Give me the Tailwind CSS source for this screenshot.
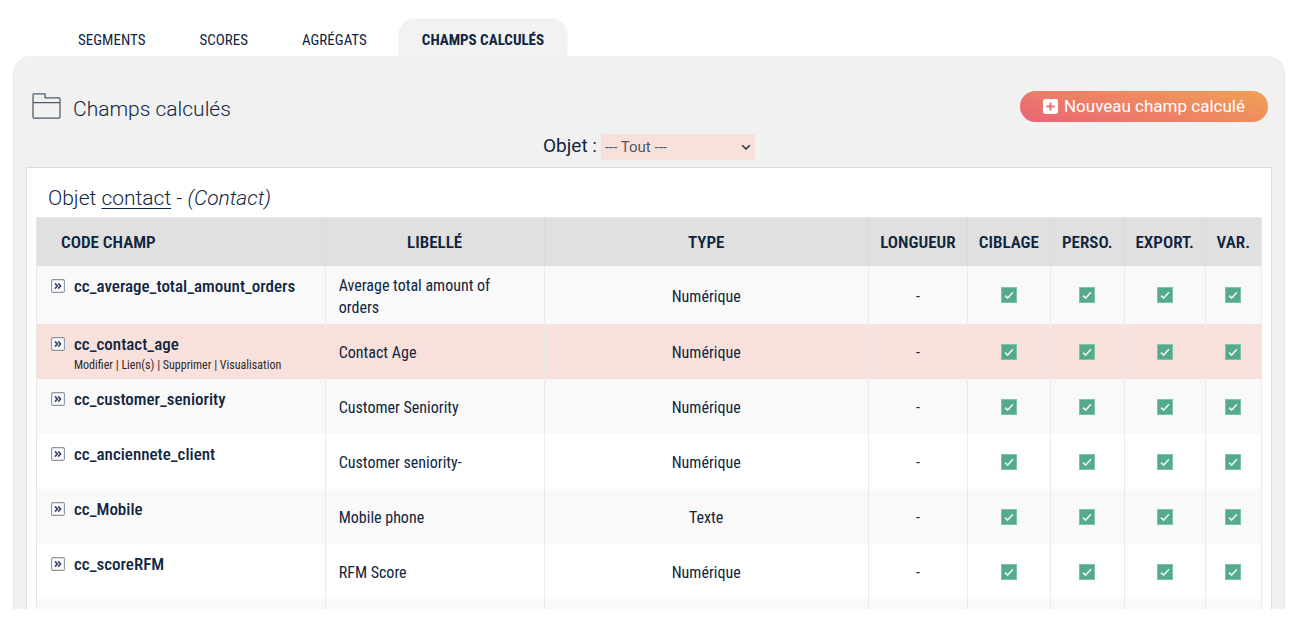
<!DOCTYPE html>
<html lang="fr">
<head>
<meta charset="utf-8">
<meta name="viewport" content="width=device-width, initial-scale=1">
<title>Champs calculés</title>
<script src="https://cdn.jsdelivr.net/npm/@tailwindcss/browser@4"></script>
</head>
<body class="flex h-screen flex-col overflow-hidden bg-white px-[13px] pt-5 pb-[9px] font-['Roboto_Condensed','Liberation_Sans_Narrow',Roboto,sans-serif] text-[#10253f]">

<svg class="hidden" aria-hidden="true">
  <symbol id="check" viewBox="0 0 16 16">
    <rect x="0.5" y="0.5" width="15" height="15" fill="#54aa8a" stroke="#7cc4a8" stroke-width="1"/>
    <path d="M4 8.6 6.6 11 12 5.2" fill="none" stroke="#e9f7f0" stroke-width="1.6"/>
  </symbol>
  <symbol id="expand" viewBox="0 0 14 14">
    <rect x="0.6" y="0.6" width="12.8" height="12.8" rx="1.4" fill="#fdfdfd" stroke="#8b95a3" stroke-width="1.1"/>
    <path d="M4 4.4 6.3 7 4 9.6M7.2 4.4 9.5 7 7.2 9.6" fill="none" stroke="#3a4870" stroke-width="1.7"/>
  </symbol>
</svg>

<nav class="flex h-9 shrink-0 pl-[38px] text-[15px] leading-9">
  <a href="#segments" class="px-[27px] pt-[2px]">SEGMENTS</a>
  <a href="#scores" class="px-[27px] pt-[2px]">SCORES</a>
  <a href="#agregats" class="px-[27px] pt-[2px]">AGRÉGATS</a>
  <a href="#champs" aria-current="page" class="ml-[5px] rounded-t-2xl bg-[#f2f2f2] px-[23px] pt-[2px] font-bold shadow-[0_-1px_2px_rgba(0,0,0,0.1)]">CHAMPS CALCULÉS</a>
</nav>

<main class="flex min-h-0 flex-1 flex-col rounded-t-[18px] border-x border-[#e8e8e8] bg-[#f1f1f1] px-3">
  <header class="flex items-start justify-between pt-[35px] pr-1 pl-[6px]">
    <h1 class="flex items-center gap-3 font-[Roboto,sans-serif] text-[21px] leading-9 font-light">
      <svg class="-mt-[6px] h-[26px] w-[29px]" viewBox="0 0 30 27" fill="none" stroke="#4b5b6d" stroke-width="1.3" stroke-linejoin="round" aria-hidden="true"><path d="M1 10V2Q1 1 2 1H13.5V5H28Q29 5 29 6V25Q29 26 28 26H2Q1 26 1 25V10H29"/></svg>
      Champs calculés
    </h1>
    <button type="button" class="flex h-[31px] items-center gap-[6px] rounded-full bg-[linear-gradient(14deg,#ea6377_0%,#ec7b68_35%,#ee8c60_65%,#f0a154_100%)] px-[23px] font-[Roboto,sans-serif] text-[17px] text-white">
      <svg class="size-[15px]" viewBox="0 0 15 15" aria-hidden="true"><rect width="15" height="15" rx="2.4" fill="#fff"/><path d="M7.5 3.4V11.6M3.4 7.5H11.6" stroke="#ee6f70" stroke-width="1.9"/></svg>
      Nouveau champ calculé
    </button>
  </header>

  <div class="-mt-1 flex h-11 items-start justify-center gap-1 pt-[11px] font-[Roboto,sans-serif]">
    <label for="objet" class="text-[19px] leading-6">Objet :</label>
    <div class="relative">
      <select id="objet" class="h-[26px] w-[154px] appearance-none bg-[#f8e1dc] px-1 text-[15px] text-[#4d5966]">
        <option>--- Tout ---</option>
        <option>contact</option>
      </select>
      <svg class="pointer-events-none absolute top-[10px] right-1 h-[7px] w-[10px]" viewBox="0 0 10 7" fill="none" stroke="#1d2f45" stroke-width="1.5" aria-hidden="true"><path d="M1.2 1.2 5 5 8.8 1.2"/></svg>
    </div>
  </div>

  <section class="min-h-0 flex-1 overflow-hidden border border-b-0 border-[#dcdcdc] bg-white px-[9px] pt-3">
    <h2 class="pb-px pl-3 font-[Roboto,sans-serif] text-[21px] leading-9 font-light">Objet <span class="underline decoration-1 underline-offset-3">contact</span> - <i>(Contact)</i></h2>
    <table class="w-full table-fixed border-collapse border border-[#e6e6e6] text-base leading-[22px]">
      <colgroup>
        <col class="w-[23.57%]"><col class="w-[17.86%]"><col class="w-[26.48%]"><col class="w-[8.08%]"><col class="w-[6.77%]"><col class="w-[6.04%]"><col class="w-[6.6%]"><col>
      </colgroup>
      <thead>
        <tr class="h-12 bg-[#e0e0e0] text-[17px] *:pt-px *:font-semibold">
          <th scope="col" class="border-r border-[#dadada] pl-6 text-left">CODE CHAMP</th>
          <th scope="col" class="border-r border-[#dadada]">LIBELLÉ</th>
          <th scope="col" class="border-r border-[#dadada]">TYPE</th>
          <th scope="col" class="border-r border-[#dadada]">LONGUEUR</th>
          <th scope="col" class="border-r border-[#dadada]">CIBLAGE</th>
          <th scope="col" class="border-r border-[#dadada]">PERSO.</th>
          <th scope="col" class="border-r border-[#dadada]">EXPORT.</th>
          <th scope="col">VAR.</th>
        </tr>
      </thead>
      <tbody id="rows"></tbody>
    </table>
  </section>
</main>

<script>
const fields = [
  ["cc_average_total_amount_orders", "Average total amount of orders", "Numérique"],
  ["cc_contact_age", "Contact Age", "Numérique"],
  ["cc_customer_seniority", "Customer Seniority", "Numérique"],
  ["cc_anciennete_client", "Customer seniority-", "Numérique"],
  ["cc_Mobile", "Mobile phone", "Texte"],
  ["cc_scoreRFM", "RFM Score", "Numérique"],
];
const links = `<div class="pl-[23px] text-[12px] leading-[18px] text-[#2b2b2b]"><a href="#modifier">Modifier</a> | <a href="#liens">Lien(s)</a> | <a href="#supprimer">Supprimer</a> | <a href="#visualisation">Visualisation</a></div>`;
const check = `<td class="border-r border-[#ebebeb] pt-px"><svg class="mx-auto size-4" role="img" aria-label="Oui"><use href="#check"/></svg></td>`;
document.getElementById("rows").innerHTML = fields.map(([code, label, type], i) => `
  <tr class="${i === 0 ? "h-[58px]" : "h-[55px]"} ${i === 1 ? "bg-[#f8e1dc]" : i % 2 ? "bg-white" : "bg-[#f9f9f9]"}">
    <td class="border-r border-[#ebebeb] pt-2 pl-[14px] align-top">
      <div class="flex items-start gap-[9px] text-[17px] leading-6 font-medium"><button type="button" class="mt-[5px] flex" aria-label="Déplier"><svg class="size-[14px]"><use href="#expand"/></svg></button>${code}</div>
      ${i === 1 ? links : ""}
    </td>
    <td class="border-r border-[#ebebeb] pt-1 pr-8 pl-[13px]">${label}</td>
    <td class="border-r border-[#ebebeb] pt-1 text-center">${type}</td>
    <td class="border-r border-[#ebebeb] pt-1 text-center">-</td>
    ${check.repeat(4)}
  </tr>`).join("") + `<tr class="h-[55px] bg-[#f9f9f9]">${`<td class="border-r border-[#ebebeb]"></td>`.repeat(8)}</tr>`;
</script>
</body>
</html>
